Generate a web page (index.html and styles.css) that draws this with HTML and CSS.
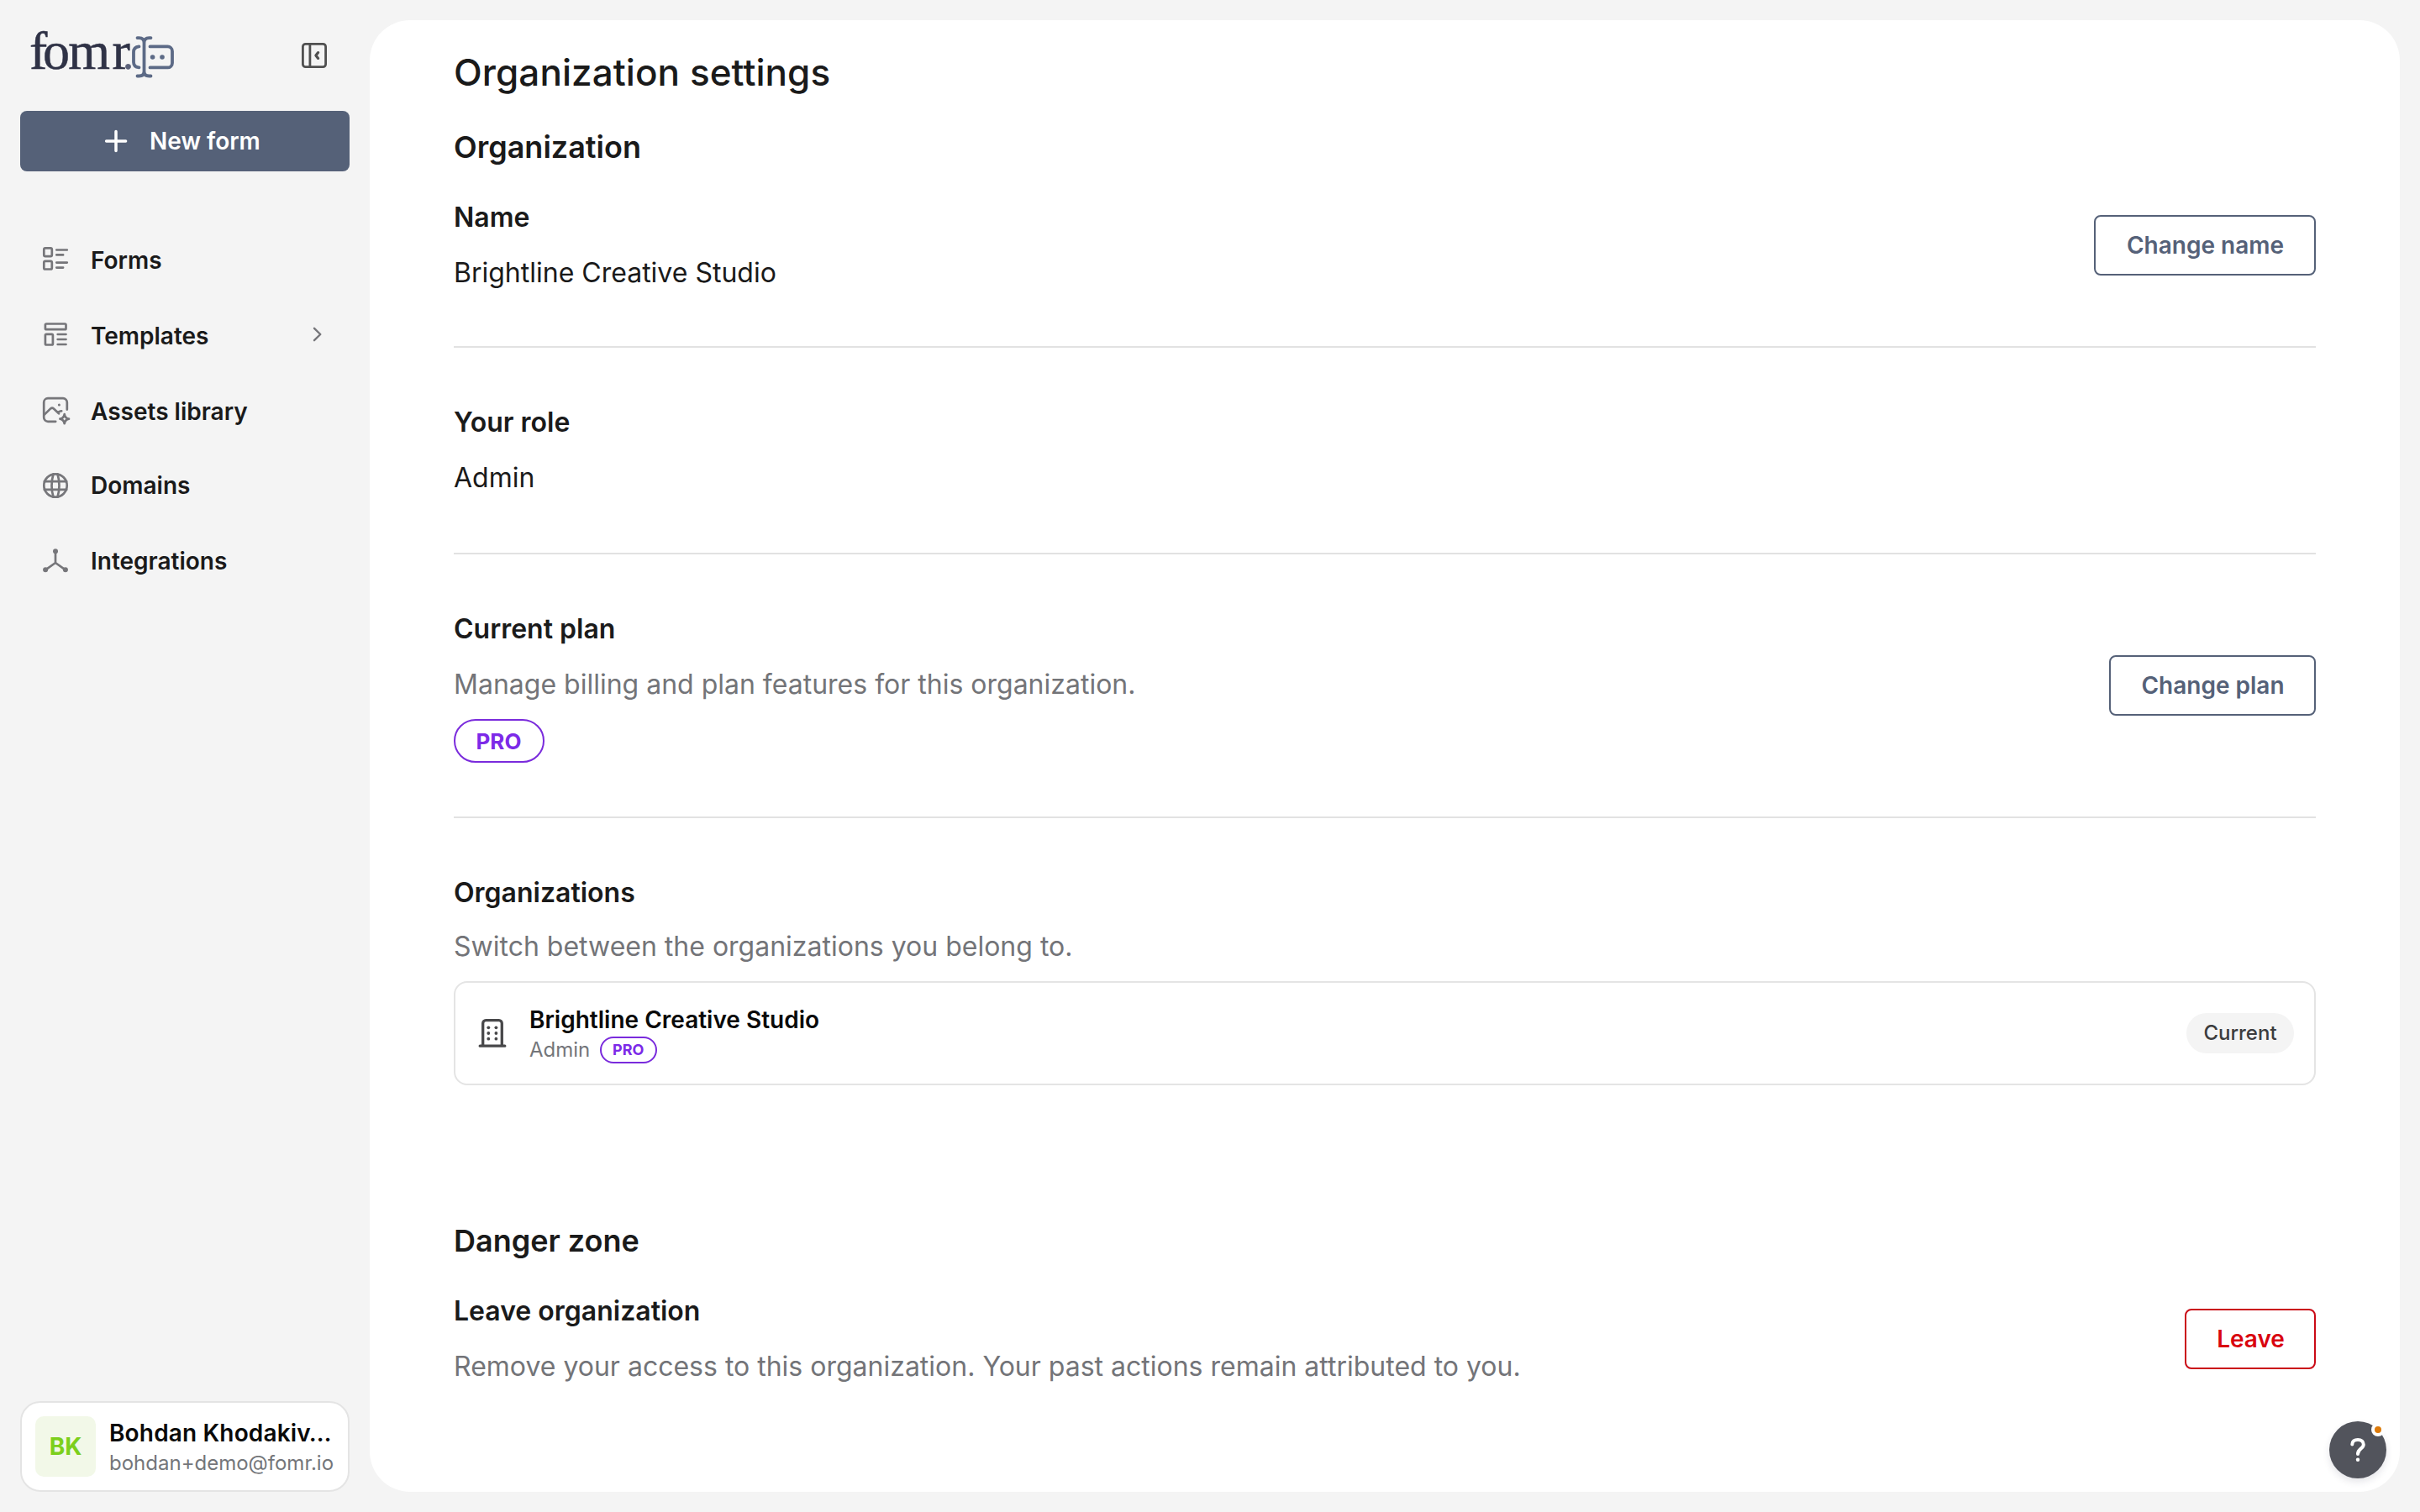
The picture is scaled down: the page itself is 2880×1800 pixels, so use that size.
FILE: index.html
```html
<!DOCTYPE html>
<html lang="en">
<head>
<meta charset="utf-8">
<title>Organization settings</title>
<link rel="stylesheet" href="styles.css">
</head>
<body>
<div class="app">
  <aside class="sidebar">
    <header class="brand">
      <div class="logo">
        <span class="logo-text"><span class="logo-f">f</span>o<span class="logo-m">m</span><span class="logo-r">r</span><span class="logo-dot">.</span></span>
        <svg class="logo-mark" width="52" height="52" viewBox="0 0 52 52" fill="none" stroke="currentColor" stroke-width="3.800" stroke-linecap="round" stroke-linejoin="round">
          <path d="M9.500 13.400C5 13.800 3 16.500 3 20v12c0 3.500 2 6 6.500 6.400"/>
          <path d="M22.500 13.400H43.500a5.500 5.500 0 0 1 5.500 5.500V32.900a5.500 5.500 0 0 1-5.500 5.500H22.500"/>
          <path d="M7.500 3.100h2q6 0 6 6V43q0 5.500-6 5.500h-2M23.500 3.100h-2q-6 0-6 6M15.500 43q0 5.500 6 5.500h2"/>
          <circle cx="25.600" cy="26" r="2.800" fill="currentColor" stroke="none"/>
          <circle cx="37" cy="26" r="2.800" fill="currentColor" stroke="none"/>
        </svg>
      </div>
      <button class="collapse" aria-label="Collapse sidebar">
        <svg width="36" height="36" viewBox="0 0 36 36" fill="none" stroke="currentColor" stroke-width="2.800" stroke-linecap="round" stroke-linejoin="round">
          <rect x="4.400" y="4.400" width="27.200" height="27.200" rx="3.200"/>
          <path d="M12.900 5v26"/>
          <path d="M22.600 14.600L19.900 18l2.700 3.400" stroke-width="3.200"/>
        </svg>
      </button>
    </header>

    <button class="new-form">
      <svg width="36" height="36" viewBox="0 0 36 36" fill="none" stroke="currentColor" stroke-width="3.500" stroke-linecap="round"><path d="M18 6.400v23.200M6.600 18h23"/></svg>
      <span>New form</span>
    </button>

    <nav class="nav">
      <a class="nav-item">
        <svg class="icon" viewBox="0 0 36 36"><rect x="4.300" y="5.400" width="9.500" height="9.800" rx="1.600"/><rect x="4.300" y="20.900" width="9.500" height="9.600" rx="1.600"/><path d="M19.300 7.500h12.500M19.300 13.400h7.800M19.300 22.600h12.500M19.300 28.600h7.800"/></svg>
        <span>Forms</span>
      </a>
      <a class="nav-item">
        <svg class="icon" viewBox="0 0 36 36"><rect x="5.900" y="5.500" width="24.600" height="6.700" rx="1.300"/><rect x="5.900" y="17.900" width="9" height="12.600" rx="1.300"/><path d="M20.700 18h9.800M20.700 24h9.800M20.700 30h9.800"/></svg>
        <span>Templates</span>
        <svg class="chevron" viewBox="0 0 12 20"><path d="M2 2.800l7.300 7.200L2 17.200"/></svg>
      </a>
      <a class="nav-item">
        <svg class="icon" viewBox="0 0 36 36"><path d="M31.800 17.600V9a4.800 4.800 0 0 0-4.800-4.800H9A4.800 4.800 0 0 0 4.200 9v18A4.800 4.800 0 0 0 9 31.800h9.200"/><path d="M4.800 23.600L12.200 16.400c1.300-1.200 2.400-1.200 3.700 0L22 22.200M21.200 21.200l1.800-1.300q1.200-.8 2.200-.6"/><circle class="solid" cx="22.400" cy="12" r="1.500"/><path d="M28.700 23.200q.8 4.700 5.300 5.500q-4.500.8-5.300 5.500q-.8-4.700-5.300-5.500q4.500-.8 5.300-5.500z"/></svg>
        <span>Assets library</span>
      </a>
      <a class="nav-item nav-item--level nav-item--tight">
        <svg class="icon" viewBox="0 0 36 36"><circle cx="18" cy="18" r="13.700"/><path d="M15.500 4.400q-4 13.600 0 27.200M20.500 4.400q4 13.600 0 27.200M4.800 13.100h26.400M4.800 22.900h26.400"/></svg>
        <span>Domains</span>
      </a>
      <a class="nav-item nav-item--level">
        <svg class="icon" viewBox="0 0 36 36"><path d="M18 6.500v13.500M18 20L6.200 28.300M18 20l11.800 8.300"/><circle class="solid" cx="18" cy="6.200" r="3"/><circle class="solid" cx="6.100" cy="28.300" r="3"/><circle class="solid" cx="29.900" cy="28.300" r="3"/></svg>
        <span>Integrations</span>
      </a>
    </nav>

    <div class="user">
      <div class="avatar">BK</div>
      <div class="user-info">
        <div class="user-name">Bohdan Khodakiv…</div>
        <div class="user-email">bohdan+demo@fomr.io</div>
      </div>
    </div>
  </aside>

  <main class="panel">
    <h1 class="title">Organization settings</h1>

    <h2 class="heading">Organization</h2>
    <section class="row row--first">
      <div class="text">
        <h3 class="label">Name</h3>
        <p class="value">Brightline Creative Studio</p>
      </div>
      <button class="btn btn--name">Change name</button>
    </section>
    <section class="row row--role">
      <div class="text">
        <h3 class="label">Your role</h3>
        <p class="value">Admin</p>
      </div>
    </section>
    <section class="row row--plan">
      <div class="text">
        <h3 class="label">Current plan</h3>
        <p class="value muted">Manage billing and plan features for this organization.</p>
        <span class="pill">PRO</span>
      </div>
      <button class="btn btn--plan">Change plan</button>
    </section>
    <section class="orgs">
      <h3 class="label">Organizations</h3>
      <p class="value muted">Switch between the organizations you belong to.</p>
      <div class="card">
        <svg class="building" width="40" height="40" viewBox="0 0 40 40" fill="none" stroke="currentColor" stroke-width="3.300" stroke-linecap="round" stroke-linejoin="round">
          <path d="M8.700 35V8.200a3.500 3.500 0 0 1 3.500-3.500H27.800a3.500 3.500 0 0 1 3.500 3.500V35M5.200 35.200H34.800"/>
          <g fill="currentColor" stroke="none"><circle cx="15.300" cy="13.300" r="1.900"/><circle cx="24.400" cy="13.300" r="1.900"/><circle cx="15.300" cy="20" r="1.900"/><circle cx="24.400" cy="20" r="1.900"/><circle cx="15.300" cy="26.700" r="1.900"/><circle cx="24.400" cy="26.700" r="1.900"/></g>
        </svg>
        <div class="card-text">
          <div class="card-name">Brightline Creative Studio</div>
          <div class="card-meta"><span>Admin</span><span class="pill pill--small">PRO</span></div>
        </div>
        <span class="tag">Current</span>
      </div>
    </section>

    <h2 class="heading">Danger zone</h2>
    <section class="row row--last">
      <div class="text">
        <h3 class="label">Leave organization</h3>
        <p class="value muted">Remove your access to this organization. Your past actions remain attributed to you.</p>
      </div>
      <button class="btn btn--leave">Leave</button>
    </section>
  </main>
</div>

<button class="help" aria-label="Help">
  <svg width="68" height="68" viewBox="0 0 68 68" fill="none" stroke="currentColor" stroke-width="4" stroke-linecap="round" stroke-linejoin="round">
    <path d="M27.300 27.400C27.300 24 30 22 34 22c4.200 0 6.800 2.300 6.800 5.700 0 4.900-6.800 4.700-6.800 11.300"/>
    <circle cx="34" cy="45.700" r="2.200" fill="currentColor" stroke="none"/>
  </svg>
  <span class="help-badge"></span>
</button>
</body>
</html>
```
FILE: styles.css
```css
* { box-sizing: border-box; margin: 0; padding: 0; }

body {
  width: 2880px;
  height: 1800px;
  overflow: hidden;
  background: #f4f4f4;
  color: #1a1a1a;
  font-family: "Inter", sans-serif;
  font-size: 28px;
}

button { font: inherit; border: 0; background: none; }
svg { display: block; flex: none; }

.app {
  display: grid;
  grid-template-columns: 440px 1fr;
  height: 1800px;
  padding: 0 24px 0 0;
}

/* Sidebar */
.sidebar {
  display: flex;
  flex-direction: column;
  padding: 0 24px 24px;
}

.brand {
  display: flex;
  justify-content: space-between;
  height: 132px;
  padding: 0 24px 0 12px;
}

.logo { display: flex; align-items: flex-start; padding-top: 25px; }

.logo-text {
  width: 120px;
  line-height: 71px;
  font-family: "Liberation Serif", serif;
  font-size: 64px;
  letter-spacing: -1.8px;
  text-indent: -1px;
  color: #2f3246;
  white-space: nowrap;
  -webkit-text-stroke: .5px currentColor;
}

.logo-f { letter-spacing: -5.4px; }
.logo-m { letter-spacing: 2.7px; }
.logo-r { letter-spacing: -9px; }
.logo-dot { font-size: 52px; color: #5a6079; }
.logo-mark { margin-top: 17px; color: #5c6a86; }
.collapse { height: 36px; margin-top: 48px; color: #505050; }

.new-form {
  display: flex;
  align-items: center;
  gap: 22px;
  height: 72px;
  padding-left: 96px;
  border-radius: 8px;
  background: #556178;
  color: #fff;
  font-weight: 600;
  line-height: 34px;
}

.nav { display: flex; flex-direction: column; margin-top: 61px; }

.nav-item {
  display: flex;
  align-items: center;
  height: 90px;
  padding: 0 32px 0 24px;
  font-weight: 600;
  line-height: 34px;
}

.nav-item span { margin-left: 24px; }
.nav-item--tight { margin-top: -2px; }

.icon {
  width: 36px;
  height: 36px;
  margin-top: -4px;
  fill: none;
  stroke: #76767a;
  stroke-width: 2.7;
  stroke-linecap: round;
  stroke-linejoin: round;
}

.nav-item--level .icon { margin-top: 0; }
.icon .solid { fill: #76767a; stroke: none; }

.chevron {
  width: 12px;
  height: 20px;
  margin: -4px 0 0 auto;
  fill: none;
  stroke: #76767a;
  stroke-width: 2.4;
  stroke-linecap: round;
  stroke-linejoin: round;
}

.user {
  display: flex;
  gap: 16px;
  height: 108px;
  margin-top: auto;
  padding: 16px;
  border: 2px solid #e4e4e4;
  border-radius: 24px;
  background: #fff;
}

.avatar {
  width: 72px;
  height: 72px;
  border-radius: 10px;
  background: #f2f8e8;
  color: #7ccf1c;
  font-weight: 700;
  line-height: 72px;
  text-align: center;
}

.user-info { padding-top: 2px; white-space: nowrap; }

.user-name {
  color: #0a0a0a;
  font-weight: 600;
  line-height: 36px;
  letter-spacing: .16px;
}

.user-email {
  margin-top: 2px;
  color: #74767a;
  font-size: 24px;
  line-height: 31px;
}

/* Settings panel */
.panel {
  height: 1752px;
  margin-top: 24px;
  padding: 34px 100px 0;
  border-radius: 48px;
  background: #fff;
}

.title {
  margin-bottom: 33px;
  font-size: 44px;
  font-weight: 500;
  line-height: 56px;
  letter-spacing: .06px;
}

.heading { font-size: 36px; font-weight: 600; line-height: 56px; margin-bottom: 32px; }

.row {
  display: flex;
  justify-content: space-between;
  align-items: center;
  border-bottom: 2px solid #e2e2e2;
}

.row--first { height: 179px; padding-bottom: 63px; }
.row--role { height: 246px; padding: 65px 0 65px; }
.row--plan { height: 314px; padding: 65px 0 64px; }
.row--last { border: 0; }

.text { padding-bottom: 1px; }
.row--plan .text { padding-bottom: 0; }
.label { font-size: 32px; font-weight: 600; line-height: 47px; }
.value { margin-top: 19px; font-size: 32px; line-height: 47px; }
.muted { color: #737478; }

.pill {
  display: flex;
  justify-content: center;
  width: 108px;
  height: 52px;
  margin-top: 18px;
  padding-right: 1px;
  border: 2px solid #7a2bdc;
  border-radius: 26px;
  color: #7c2ae8;
  font-size: 26px;
  font-weight: 700;
  line-height: 49px;
}

.pill--small {
  width: 68px;
  height: 32px;
  margin: 0;
  font-size: 18px;
  line-height: 27px;
}

.btn {
  height: 72px;
  padding-left: 1px;
  border: 2px solid #556178;
  border-radius: 8px;
  color: #556178;
  font-weight: 600;
  line-height: 34px;
}

.btn--name { width: 264px; }
.btn--plan { width: 246px; margin-top: -1px; }
.btn--leave { width: 156px; border-color: #ca0a16; color: #d9040f; }

.orgs { padding-top: 65px; margin-bottom: 157px; }
.orgs .value { margin-top: 17px; }

.card {
  display: flex;
  align-items: center;
  gap: 24px;
  height: 124px;
  margin-top: 18px;
  padding: 0 24px;
  border: 2px solid #e4e4e4;
  border-radius: 16px;
}

.building { color: #48484a; }
.card-text { margin-top: 2px; }
.card-name { color: #0a0a0a; font-weight: 600; line-height: 36px; margin-bottom: 2px; }

.card-meta {
  display: flex;
  gap: 12px;
  height: 32px;
  color: #74767a;
  font-size: 24px;
  line-height: 31px;
}

.card-meta .pill { line-height: 27px; }

.tag {
  width: 128px;
  height: 48px;
  margin-left: auto;
  border-radius: 24px;
  background: #f4f4f4;
  color: #3c3c3e;
  font-size: 24px;
  font-weight: 500;
  line-height: 47px;
  text-align: center;
}

/* Floating help button */
.help {
  position: fixed;
  right: 40px;
  bottom: 40px;
  width: 68px;
  height: 68px;
  border-radius: 50%;
  background: #52545c;
  color: #fff;
  box-shadow: 0 4px 8px rgba(40, 40, 70, .12);
}

.help-badge {
  position: absolute;
  top: 2px;
  right: 2px;
  width: 16px;
  height: 16px;
  border: 4px solid #fff;
  border-radius: 50%;
  background: #dd7a0a;
}
```
